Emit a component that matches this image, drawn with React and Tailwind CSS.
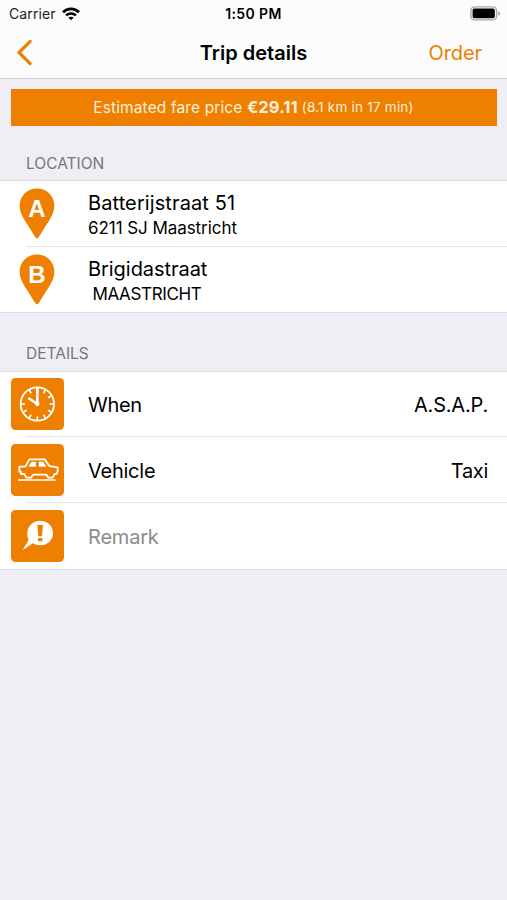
const ORANGE_TILE = 'mb-[2px] block h-[52px] w-[53px] shrink-0';

function Wifi() {
  return (
    <svg className="block h-[14px] w-[18px]" viewBox="0 0 18 14" fill="none" stroke="#000">
      <path d="M1 5.2C5.4 0.7 12.6 0.7 17 5.2" strokeWidth="2.8" />
      <path d="M4 8.4C6.8 5.7 11.2 5.7 14 8.4" strokeWidth="2.5" />
      <path d="M9 13.3L6.3 10.6C7.8 9.3 10.2 9.3 11.7 10.6Z" fill="#000" stroke="none" />
    </svg>
  );
}

function Battery() {
  return (
    <svg className="block h-[15px] w-[31px]" viewBox="0 0 31 15">
      <rect x="0.9" y="0.9" width="25.6" height="13" rx="3.6" fill="#fff" stroke="#a6a6a8" strokeWidth="1.4" />
      <rect x="2.6" y="2.6" width="22.2" height="9.7" rx="1.8" fill="#000" />
      <path d="M28 5.2C30.6 6 30.6 9 28 9.8Z" fill="#a6a6a8" />
    </svg>
  );
}

function Pin({ letter }) {
  return (
    <svg className="block h-[51px] w-[36px]" viewBox="0 0 36 51">
      <path d="M18 50.4C16.8 50.4 14.5 46.5 11.5 41.5C7 34 0.6 26.5 0.6 17.6C0.6 7.8 8.4 0.4 18 0.4S35.4 7.8 35.4 17.6C35.4 26.5 29 34 24.5 41.5C21.5 46.5 19.2 50.4 18 50.4Z" fill="#ee7f00" />
      <text x="18" y="29" textAnchor="middle" fill="#fff" className="text-[24px] font-bold [font-family:'Liberation_Sans',Arial,sans-serif]">{letter}</text>
    </svg>
  );
}

function Tile({ children }) {
  return (
    <svg className={ORANGE_TILE} viewBox="32 25 159 156" fill="none">
      <rect x="32" y="25" width="159" height="156" rx="14" fill="#ee7f00" />
      {children}
    </svg>
  );
}

function ClockIcon() {
  const ticks = [30, 60, 90, 120, 150, 180, 210, 240, 270, 330];
  return (
    <Tile>
      <g stroke="#fff">
        <circle cx="111" cy="103" r="50" strokeWidth="5.5" />
        {ticks.map((a) => (
          <path key={a} d="M111 55V66" strokeWidth="5" transform={`rotate(${a} 111 103)`} />
        ))}
        <path d="M111 54V103M84 85L111 103" strokeWidth="8" />
        <circle cx="111" cy="103" r="4" strokeWidth="5" fill="#fff" />
      </g>
    </Tile>
  );
}

function CarIcon() {
  return (
    <Tile>
      <g stroke="#fff" strokeWidth="5.5" strokeLinejoin="round">
        <path d="M72 115H62V108H57V93H75L87 71H133L147 91L172 95V108L168 115H163L157 126H144L137 117H99L92 126H78Z" />
        <path d="M53 133H166" strokeWidth="5" />
        <path d="M94 78H107V93H84ZM115 78H129L138 93H115Z" fill="#fff" stroke="none" />
      </g>
    </Tile>
  );
}

function RemarkIcon() {
  return (
    <Tile>
      <path d="M120 57C141 57 158 72 158 94S141 131 120 131C112 131 104 129 98 125L67 145L85 115C82 109 81 102 81 94C81 72 99 57 120 57Z" fill="#fff" />
      <path d="M111 70H128L125 104H114ZM113 109H126V119H113Z" fill="#ee7f00" />
    </Tile>
  );
}

function LocationRow({ letter, title, titleClass, subtitle, subtitleClass, last }) {
  return (
    <div className="relative flex h-[66px] pl-[19px]">
      <div className="w-[69px] pt-[7px]"><Pin letter={letter} /></div>
      <div className="pt-[9px] whitespace-pre">
        <div className={'text-[20px] leading-[26px] ' + titleClass}>{title}</div>
        <div className={'text-[17px] leading-[24px] ' + subtitleClass}>{subtitle}</div>
      </div>
      {!last && <div className="absolute right-0 bottom-0 left-[26px] h-px bg-[#e4e4e6]" />}
    </div>
  );
}

function DetailRow({ icon, label, labelClass, value, valueClass, last }) {
  return (
    <div className="relative flex h-[66px] items-center pr-[19px] pl-[11px] text-[20px] leading-[26px]">
      {icon}
      <span className={'ml-[24px] flex-1 ' + labelClass}>{label}</span>
      <span className={valueClass}>{value}</span>
      {!last && <div className="absolute right-0 bottom-[1px] left-[26px] h-px bg-[#e4e4e6]" />}
    </div>
  );
}

export default function App() {
  return (
    <div className="h-[900px] w-[507px] overflow-hidden bg-[#efeef4] text-black [font-family:Inter,'Liberation_Sans',sans-serif]">
      <header className="h-[79px] border-b border-[#d3d2d6] bg-[#fcfcfd]">
        <div className="grid h-[27px] grid-cols-3 items-center pr-[6px] pl-[9px] text-[14px] leading-[20px]">
          <div className="flex items-center gap-[6px] text-[#222]">
            <span className="tracking-[0.1px]">Carrier</span>
            <Wifi />
          </div>
          <span className="pr-[3px] text-center text-[14px] font-semibold tracking-[0.4px] whitespace-nowrap">1:50 PM</span>
          <div className="flex justify-end"><Battery /></div>
        </div>
        <div className="grid h-[51px] grid-cols-3 items-center pr-[25px] pl-[16px] text-[20px] leading-[28px]">
          <svg className="block h-[28px] w-[18px]" viewBox="0 0 18 28" fill="none" stroke="#ee7f00" strokeWidth="3.2" strokeLinecap="round">
            <path d="M14.2 2.4L3 13.5L14.2 24.6" />
          </svg>
          <h1 className="pl-[9px] text-center font-semibold tracking-[0.02px] whitespace-nowrap">Trip details</h1>
          <span className="text-right tracking-[-0.1px] text-[#ee7f00]">Order</span>
        </div>
      </header>
      <div className="mt-[10px] mr-[10px] ml-[11px] flex h-[37px] items-center justify-center bg-[#ee7f00] pr-[1px] text-[15.5px] whitespace-pre text-[#fff0da]">
        <span className="tracking-[0.12px]">Estimated fare price </span>
        <b className="text-[16.5px] font-bold tracking-[0.1px]">€29.11</b>
        <span className="text-[13.5px] tracking-[0.22px]"> (8.1 km in 17 min)</span>
      </div>
      <h2 className="h-[54px] pt-[26px] pl-[26px] text-[15.5px] leading-[24px] text-[#77767b]">LOCATION</h2>
      <section className="h-[133px] border-y border-[#dddce1] bg-white">
        <LocationRow letter="A" title="Batterijstraat 51" titleClass="tracking-[0.1px]" subtitle="6211 SJ Maastricht" subtitleClass="tracking-[-0.06px]" />
        <LocationRow letter="B" title="Brigidastraat" titleClass="tracking-[-0.05px]" subtitle=" MAASTRICHT" subtitleClass="tracking-[-0.35px]" last />
      </section>
      <h2 className="h-[58px] pt-[29px] pl-[26px] text-[15.5px] leading-[24px] text-[#77767b]">DETAILS</h2>
      <section className="h-[199px] border-y border-[#dddce1] bg-white">
        <DetailRow icon={<ClockIcon />} label="When" labelClass="tracking-[-0.3px]" value="A.S.A.P." valueClass="tracking-[-0.2px]" />
        <DetailRow icon={<CarIcon />} label="Vehicle" labelClass="tracking-[-0.25px]" value="Taxi" valueClass="tracking-[-0.3px]" />
        <DetailRow icon={<RemarkIcon />} label="Remark" labelClass="tracking-[-0.2px] text-[#8b8b8b]" value="" valueClass="" last />
      </section>
    </div>
  );
}
